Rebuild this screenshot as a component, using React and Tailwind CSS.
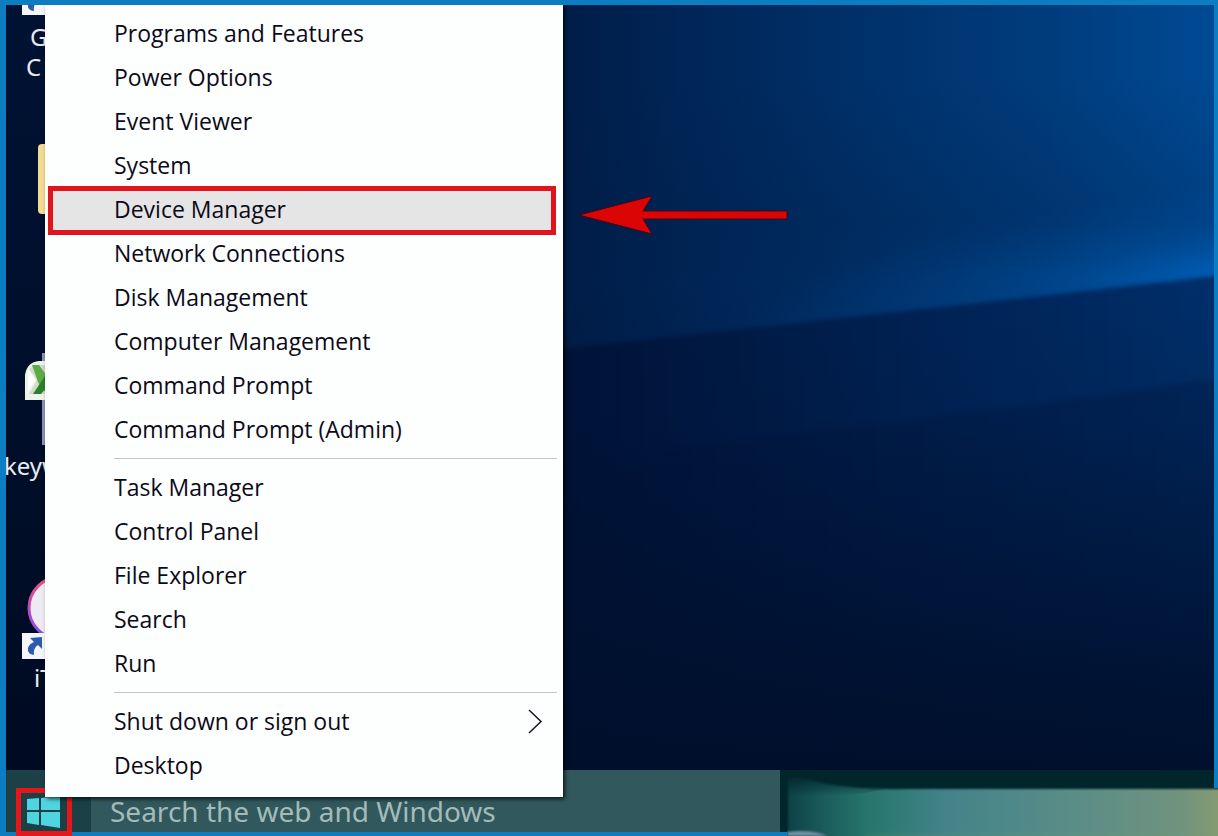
import React, { useState } from 'react';

const menuGroups = [
  [
    'Programs and Features',
    'Power Options',
    'Event Viewer',
    'System',
    'Device Manager',
    'Network Connections',
    'Disk Management',
    'Computer Management',
    'Command Prompt',
    'Command Prompt (Admin)',
  ],
  ['Task Manager', 'Control Panel', 'File Explorer', 'Search', 'Run'],
  ['Shut down or sign out', 'Desktop'],
];

// Dark blue desktop with the light beam coming from the right
const Wallpaper = () => (
  <svg
    className="absolute inset-0 h-full w-full"
    viewBox="0 0 1208 765"
    preserveAspectRatio="none"
    aria-hidden="true"
  >
    <defs>
      <linearGradient id="upper" x1="0" y1="0" x2="1" y2="0">
        <stop offset="0" stopColor="#001433" />
        <stop offset="0.46" stopColor="#001d48" />
        <stop offset="0.66" stopColor="#002d64" />
        <stop offset="0.86" stopColor="#003c7c" />
        <stop offset="1" stopColor="#004a94" />
      </linearGradient>
      <linearGradient id="midShade" x1="0" y1="0" x2="0" y2="1">
        <stop offset="0.2" stopColor="#001c44" stopOpacity="0" />
        <stop offset="0.6" stopColor="#001c44" stopOpacity="0.25" />
        <stop offset="1" stopColor="#001c44" stopOpacity="0.1" />
      </linearGradient>
      <radialGradient id="glow" gradientUnits="userSpaceOnUse" cx="0" cy="0" r="1" gradientTransform="translate(1220 262) rotate(-9) scale(520 90)">
        <stop offset="0" stopColor="#0066c4" stopOpacity="0.7" />
        <stop offset="0.4" stopColor="#0058ac" stopOpacity="0.35" />
        <stop offset="1" stopColor="#004a98" stopOpacity="0" />
      </radialGradient>
      <linearGradient id="lower" x1="0" y1="0" x2="1" y2="0">
        <stop offset="0.46" stopColor="#001338" />
        <stop offset="0.7" stopColor="#002050" />
        <stop offset="1" stopColor="#00306c" />
      </linearGradient>
      <linearGradient id="fade" x1="0" y1="0" x2="0" y2="1">
        <stop offset="0" stopColor="#000f2c" stopOpacity="0" />
        <stop offset="0.3" stopColor="#000f2c" stopOpacity="0.15" />
        <stop offset="0.8" stopColor="#000f2c" stopOpacity="0.8" />
        <stop offset="1" stopColor="#000f2a" stopOpacity="0.95" />
      </linearGradient>
      <linearGradient id="left" x1="0" y1="0" x2="0" y2="1">
        <stop offset="0" stopColor="#001233" />
        <stop offset="1" stopColor="#000b22" />
      </linearGradient>
      <filter id="soft" x="-5%" y="-5%" width="110%" height="110%" colorInterpolationFilters="sRGB">
        <feGaussianBlur stdDeviation="2" />
      </filter>
    </defs>
    <rect width="1208" height="765" fill="url(#upper)" />
    <rect width="1208" height="360" fill="url(#midShade)" />
    <rect width="1208" height="420" fill="url(#glow)" />
    <path d="M-20 400 L558 344 Q800 317 1000 295 L1230 269 V800 H-20 Z" fill="url(#lower)" filter="url(#soft)" />
    <path d="M558 455 Q900 420 1230 371 V800 H558 Z" fill="#00143a" opacity="0.3" filter="url(#soft)" />
    <rect y="270" width="1208" height="495" fill="url(#fade)" />
    <rect width="42" height="765" fill="url(#left)" />
  </svg>
);

const ShortcutBadge = () => (
  <svg className="shrink-0" width="24" height="26" viewBox="0 0 24 26" aria-hidden="true">
    <rect width="24" height="26" fill="#f4f6fa" />
    <path d="M8 5 L20 4 V16 L16 12 Q11 15 12 22 Q5 21 6 15 Q7 11 12 9 Z" fill="#2c5bab" />
  </svg>
);

// Column of desktop icons, most of it lies under the menu
const DesktopIcons = () => (
  <div className="relative flex w-24 flex-col text-2xl leading-[30px] text-[#e8ebf0]">
    <div className="flex h-[139px] flex-col overflow-hidden pl-4">
      <div className="-mt-4">
        <ShortcutBadge />
      </div>
      <p className="mt-[7px] pl-1">
        <span className="pl-1">G</span>
        <br />
        C
      </p>
    </div>
    <div className="h-[205px] pl-8">
      <div className="h-[70px] w-12 rounded-l-sm bg-[#f1dc92]" />
    </div>
    <div className="flex h-[224px] flex-col">
      <svg className="ml-[19px] shrink-0" width="24" height="102" viewBox="0 0 24 102" aria-hidden="true">
        <rect x="17" y="4" width="8" height="92" fill="#8b93b5" />
        <path d="M0 51 V26 Q2 13 14 12 H24 V51 Z" fill="#eef5e8" />
        <path d="M4 20 Q9 16 15 16 H24 V45 H4 L12 31 Z" fill="#cfdcc8" />
        <path d="M7 16 H14 L24 30 V43 L18 42 L13 33 Z" fill="#5cab48" />
        <path d="M24 21 L8 45 H16 L24 35 Z" fill="#2d7f2c" />
        <path d="M3 20 L10 31 L3 42 Z" fill="#ffffff" />
      </svg>
      <span className="-ml-0.5">keyw</span>
    </div>
    <div className="flex flex-col pl-4">
      <svg className="ml-1 shrink-0" width="20" height="60" viewBox="0 0 20 60" aria-hidden="true">
        <defs>
          <linearGradient id="ring" x1="0" y1="0" x2="0" y2="1">
            <stop offset="0" stopColor="#f0506e" />
            <stop offset="0.6" stopColor="#b04bc8" />
            <stop offset="1" stopColor="#7a55d8" />
          </linearGradient>
        </defs>
        <circle cx="34" cy="35" r="31" fill="#eeeaf2" stroke="url(#ring)" strokeWidth="3" />
      </svg>
      <ShortcutBadge />
      <span className="pl-3 pt-1">iT</span>
    </div>
  </div>
);

const WindowsLogo = () => (
  <svg width="34" height="32" viewBox="0 0 34 32" aria-hidden="true">
    <path d="M1 3 L13 2 V14 H1 Z M15 2 L34 0 V14 H15 Z M1 16 H13 V29 L1 27 Z M15 16 H34 V32 L15 29 Z" fill="#4fd5e0" />
  </svg>
);

const Taskbar = () => (
  <footer className="flex h-[66px] shrink-0 bg-[#00262c]">
    <div className="flex w-[781px] border-b-4 border-[#0b7dc0]">
      <button
        type="button"
        aria-label="Start"
        className="flex w-[85px] items-end bg-[#1b4147] pb-1 pl-5"
      >
        <WindowsLogo />
      </button>
      <input
        type="text"
        aria-label="Search the web and Windows"
        placeholder="Search the web and Windows"
        className="min-w-0 flex-1 bg-[#31585c] pl-[19px] pt-5 text-[28px] leading-8 text-white outline-none placeholder:text-[#a3bbba]"
      />
      <div className="w-[7px] bg-[#00262c]" />
    </div>
    <svg className="h-full min-w-0 flex-1" viewBox="0 0 431 66" preserveAspectRatio="none" aria-hidden="true">
      <defs>
        <linearGradient id="aurora" x1="0" y1="0" x2="1" y2="0">
          <stop offset="0" stopColor="#0d4247" />
          <stop offset="0.08" stopColor="#1b5b5b" />
          <stop offset="0.18" stopColor="#26756b" />
          <stop offset="0.36" stopColor="#43838a" />
          <stop offset="0.65" stopColor="#5a8d87" />
          <stop offset="0.9" stopColor="#71937e" />
          <stop offset="1" stopColor="#8b9c70" />
        </linearGradient>
        <linearGradient id="auroraTop" x1="0" y1="0" x2="0" y2="1">
          <stop offset="0" stopColor="#00262c" />
          <stop offset="1" stopColor="#00262c" stopOpacity="0" />
        </linearGradient>
        <linearGradient id="auroraEdge" x1="0" y1="0" x2="0" y2="1">
          <stop offset="0.6" stopColor="#6aa070" stopOpacity="0" />
          <stop offset="1" stopColor="#6aa070" stopOpacity="0.45" />
        </linearGradient>
        <filter id="auroraSoft" colorInterpolationFilters="sRGB">
          <feGaussianBlur stdDeviation="1" />
        </filter>
      </defs>
      <rect width="431" height="66" fill="#00262c" />
      <path d="M1 7 Q20 8 40 14 Q75 20 120 19 H440 V80 H1 Z" fill="url(#aurora)" filter="url(#auroraSoft)" />
      <path d="M0 4 H40 Q60 16 100 19 L60 26 H0 Z" fill="url(#auroraTop)" />
      <path d="M120 30 H440 V80 H60 Z" fill="url(#auroraEdge)" />
      <path d="M0 62 Q25 59 40 66 H0 Z" fill="#6f91a4" filter="url(#auroraSoft)" />
      <rect x="427" width="4" height="18" fill="#0b7dc0" />
    </svg>
  </footer>
);

const MenuItem = ({ label, active, onSelect }) => (
  <li className="relative px-2" role="none">
    <button
      type="button"
      role="menuitem"
      onClick={onSelect}
      className={`flex h-11 w-full items-center justify-between pl-[61px] pr-3 text-left ${
        active ? 'bg-[#e5e5e5]' : ''
      }`}
    >
      {label}
      {label === 'Shut down or sign out' && (
        <svg width="16" height="26" viewBox="0 0 16 26" fill="none" stroke="#1a1423" strokeWidth="1.5" aria-hidden="true">
          <path d="M2 2 L14 13.5 L2 25" />
        </svg>
      )}
    </button>
    {active && (
      <div className="pointer-events-none absolute -bottom-1 -top-px left-[3px] right-[7px] border-[5px] border-[#e0141c]" />
    )}
  </li>
);

const App = () => {
  const [active, setActive] = useState('Device Manager');

  return (
    <div className="relative flex min-h-screen flex-col overflow-hidden border-l-[6px] border-t-[5px] border-[#0b7dc0] font-['Noto_Sans','Open_Sans',sans-serif]">
      <main className="relative flex-1 border-r-4 border-[#0b7dc0]">
        <Wallpaper />
        <DesktopIcons />
        {/* Arrow pointing at the highlighted entry */}
        <svg className="absolute left-[573px] top-[189px]" width="210" height="42" viewBox="0 0 210 42" aria-hidden="true">
          <path d="M0 21 L73 2 L64 17 H208 V25 H64 L73 40 Z" fill="#dc0505" stroke="#4a0512" strokeWidth="1" />
        </svg>
      </main>
      <Taskbar />

      {/* Start button marker */}
      <div className="pointer-events-none absolute bottom-0 left-[10px] h-12 w-14 border-[5px] border-[#e5171b]" />

      <nav className="absolute left-[39px] top-0 w-[518px] bg-[#fdfefe] pb-2.5 pt-1.5 font-['Open_Sans','Noto_Sans',sans-serif] text-[23px] text-[#0c0a18] shadow-[2px_2px_4px_rgba(0,0,0,0.7)]">
        {menuGroups.map((group, index) => (
          <React.Fragment key={index}>
            {index > 0 && <hr className="mb-1.5 ml-[69px] mr-1.5 mt-[7px] border-t border-[#c4c6cc]" />}
            <ul role="menu">
              {group.map((label) => (
                <MenuItem
                  key={label}
                  label={label}
                  active={label === active}
                  onSelect={() => setActive(label)}
                />
              ))}
            </ul>
          </React.Fragment>
        ))}
      </nav>
    </div>
  );
};

export default App;
